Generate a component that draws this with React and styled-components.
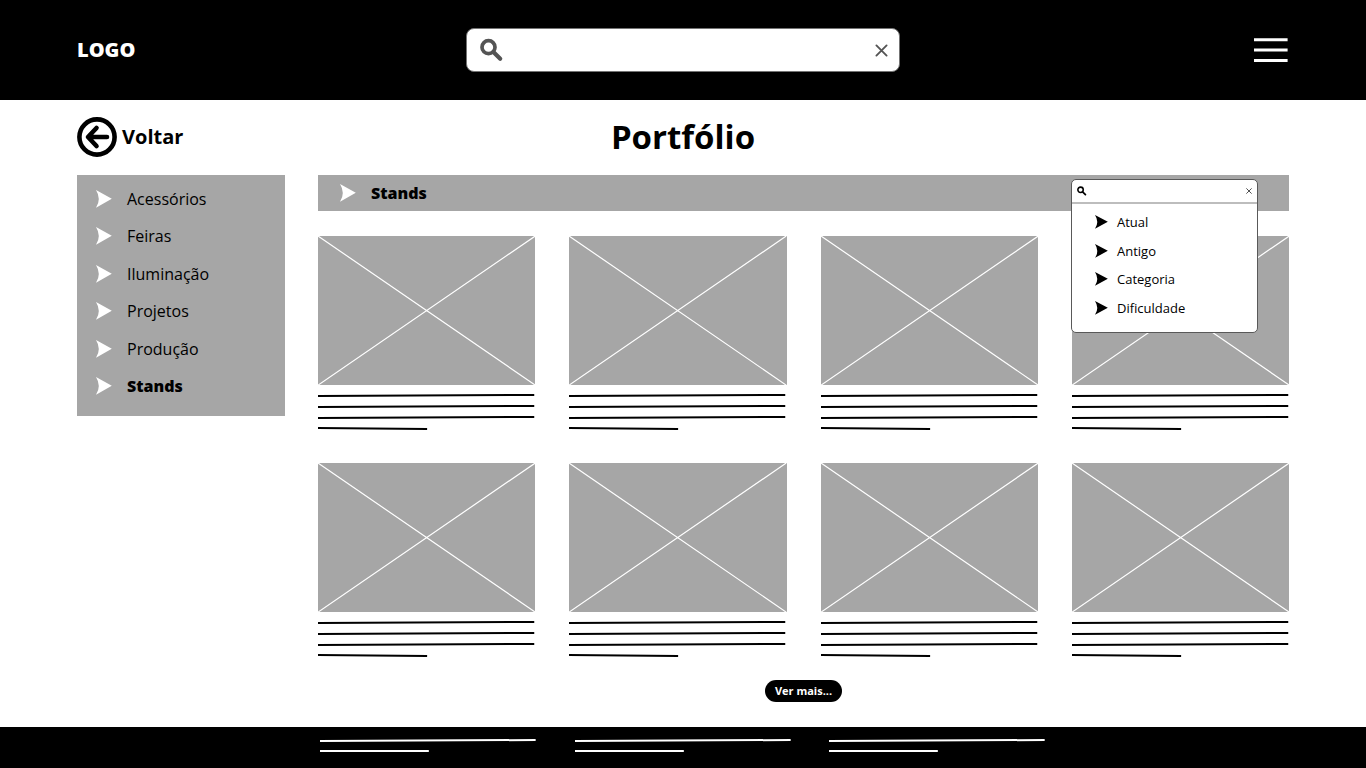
import React from "react";
import styled, { createGlobalStyle } from "styled-components";

const GlobalStyle = createGlobalStyle`
  *, *::before, *::after { box-sizing: border-box; }
  body {
    margin: 0;
    background: #fff;
    color: #000;
    font-family: "Open Sans", "Noto Sans", sans-serif;
  }
  button { font: inherit; color: inherit; }
  svg { display: block; }
`;

const Page = styled.div`
  min-height: 100vh;
  display: flex;
  flex-direction: column;
`;

const Header = styled.header`
  height: 100px;
  padding: 0 78px 0 77px;
  background: #000;
  color: #fff;
  display: grid;
  grid-template-columns: 1fr minmax(200px, 434px) 1fr;
  align-items: center;
`;

const Logo = styled.a`
  justify-self: start;
  color: inherit;
  font-size: 20px;
  line-height: 28px;
  font-weight: 800;
  text-decoration: none;
`;

const IconButton = styled.button`
  flex: none;
  padding: 0;
  border: 0;
  background: none;
  cursor: pointer;
  color: ${(p) => p.$color || "inherit"};
`;

const MenuButton = styled(IconButton)`
  justify-self: end;
`;

const SearchBox = styled.form`
  height: 44px;
  padding: 0 11px 0 13px;
  display: flex;
  align-items: center;
  gap: 8px;
  background: #fff;
  border: 1px solid #737373;
  border-radius: 8px;
`;

const SearchInput = styled.input`
  flex: 1;
  min-width: 0;
  width: 0;
  padding: 0;
  border: 0;
  outline: 0;
  background: transparent;
  font: inherit;
  font-size: ${(p) => p.$size}px;
`;

const TitleRow = styled.div`
  height: 75px;
  padding: 0 77px 2px;
  display: grid;
  grid-template-columns: 1fr auto 1fr;
  align-items: center;
`;

const BackLink = styled.a`
  justify-self: start;
  display: flex;
  align-items: center;
  gap: 5px;
  color: inherit;
  font-size: 20px;
  line-height: 28px;
  font-weight: 700;
  text-decoration: none;
`;

const Title = styled.h1`
  margin: 0;
  font-size: 33px;
  line-height: 46px;
  font-weight: 700;
`;

const Content = styled.div`
  flex: 1;
  padding: 0 77px 24px;
  display: grid;
  grid-template-columns: 208px minmax(0, 1fr);
  gap: 33px;
  align-items: start;
`;

const Sidebar = styled.nav`
  min-height: 241px;
  padding: 12px 19px 18px;
  display: flex;
  flex-direction: column;
  justify-content: space-between;
  background: #a6a6a6;
`;

const SideLink = styled.a`
  display: flex;
  align-items: center;
  gap: 15px;
  color: #000;
  font-size: 16px;
  line-height: 24px;
  font-weight: ${(p) => (p.$active ? 800 : 400)};
  text-decoration: none;
`;

const Main = styled.main`
  display: flex;
  flex-direction: column;
  align-items: stretch;
`;

const SectionBar = styled.div`
  position: relative;
  height: 36px;
  padding: 0 22px;
  display: flex;
  align-items: center;
  gap: 15px;
  background: #a6a6a6;
`;

const SectionTitle = styled.h2`
  margin: 0;
  font-size: 16px;
  line-height: 24px;
  font-weight: 800;
`;

const FilterMenu = styled.div`
  position: absolute;
  z-index: 1;
  top: 4px;
  right: 31px;
  width: 187px;
  background: #fff;
  border: 1px solid #595959;
  border-radius: 5px;
`;

const FilterSearch = styled.form`
  height: 24px;
  padding: 0 5px;
  display: flex;
  align-items: center;
  gap: 4px;
  border-bottom: 2px solid #bdbdbd;
`;

const FilterList = styled.ul`
  min-height: 128px;
  margin: 0;
  padding: 6px 23px 12px;
  display: flex;
  flex-direction: column;
  justify-content: space-between;
  list-style: none;
`;

const FilterOption = styled.button`
  width: 100%;
  height: 24px;
  padding: 0;
  display: flex;
  align-items: center;
  gap: 9px;
  border: 0;
  background: none;
  font-size: 13px;
  line-height: 24px;
  cursor: pointer;
`;

const CardGrid = styled.div`
  margin-top: 25px;
  display: grid;
  grid-template-columns: repeat(4, minmax(0, 1fr));
  gap: 33px 34px;
`;

const Card = styled.article`
  display: flex;
  flex-direction: column;
  gap: 8px;
`;

const Thumb = styled.svg`
  width: 100%;
  height: auto;
  aspect-ratio: 217 / 149;
  background: #a6a6a6;
`;

const Lines = styled.svg`
  width: 100%;
  height: ${(p) => p.$height}px;
`;

const MoreButton = styled.button`
  align-self: center;
  height: 22px;
  margin-top: 23px;
  padding: 0 10px;
  border: 0;
  border-radius: 11px;
  background: #000;
  color: #fff;
  font-size: 11px;
  line-height: 22px;
  font-weight: 700;
  cursor: pointer;
`;

const Footer = styled.footer`
  height: 41px;
  padding: 11px 320px 0;
  display: grid;
  grid-template-columns: repeat(3, minmax(0, 217px));
  gap: 38px;
  background: #000;
`;

const SearchIcon = ({ size }) => (
  <svg width={size} height={size} viewBox="0 0 24 24" fill="none" stroke="currentColor" aria-hidden="true">
    <circle cx="8.5" cy="9.2" r="6.5" strokeWidth="3.7" />
    <path d="M13.4 14 20.2 20.8" strokeWidth="4.2" strokeLinecap="round" />
  </svg>
);

const CloseIcon = ({ size, weight }) => (
  <svg width={size} height={size} viewBox="0 0 14 14" fill="none" stroke="currentColor" aria-hidden="true">
    <path d="M1.5 1.5 12.5 12.5M12.5 1.5 1.5 12.5" strokeWidth={weight} strokeLinecap="round" />
  </svg>
);

const MenuIcon = () => (
  <svg width="34" height="26" viewBox="0 0 34 26" stroke="#fff" strokeWidth="3" aria-hidden="true">
    <path d="M0 2.8H33.6M0 13H33.6M0 23.4H33.6" />
  </svg>
);

const BackIcon = () => (
  <svg width="40" height="40" viewBox="0 0 40 40" fill="none" stroke="#000" strokeWidth="4.6" aria-hidden="true">
    <circle cx="20" cy="20" r="17.6" />
    <path d="M30 20H11.5M19.5 11 11 20 19.5 29" strokeLinecap="round" strokeLinejoin="round" />
  </svg>
);

const Arrow = ({ width, height, color }) => (
  <svg width={width} height={height} viewBox="0 0 16 18" preserveAspectRatio="none" fill={color} aria-hidden="true">
    <path d="M0 0 15.8 8.8 0 17.8Q5.6 9 0 0Z" />
  </svg>
);

const Placeholder = () => (
  <Thumb viewBox="0 0 217 149" preserveAspectRatio="none" role="img" aria-label="Imagem">
    <path d="M0 0 217 149M217 0 0 149" stroke="#fff" strokeWidth="1.2" />
  </Thumb>
);

const cardLines = "M0 3 216 2M0 14 216 13M0 25 216 24M0 35 109 36";
const footerLines = "M0 3 216 2M0 13 109 13";

const TextLines = ({ d, height, color }) => (
  <Lines $height={height} viewBox={`0 0 217 ${height}`} preserveAspectRatio="none" aria-hidden="true">
    <path d={d} stroke={color} strokeWidth="2" fill="none" vectorEffect="non-scaling-stroke" />
  </Lines>
);

const categories = ["Acessórios", "Feiras", "Iluminação", "Projetos", "Produção", "Stands"];
const filters = ["Atual", "Antigo", "Categoria", "Dificuldade"];
const cards = [1, 2, 3, 4, 5, 6, 7, 8];

export default function App() {
  const stop = (e) => e.preventDefault();
  return (
    <Page>
      <GlobalStyle />
      <Header>
        <Logo href="#">LOGO</Logo>
        <SearchBox role="search" onSubmit={stop}>
          <IconButton type="submit" aria-label="Pesquisar" $color="#545454">
            <SearchIcon size={24} />
          </IconButton>
          <SearchInput type="text" aria-label="Pesquisar no site" $size={16} />
          <IconButton type="reset" aria-label="Limpar pesquisa" $color="#545454">
            <CloseIcon size={13} weight={2} />
          </IconButton>
        </SearchBox>
        <MenuButton type="button" aria-label="Menu">
          <MenuIcon />
        </MenuButton>
      </Header>

      <TitleRow>
        <BackLink href="#">
          <BackIcon />
          Voltar
        </BackLink>
        <Title>Portfólio</Title>
      </TitleRow>

      <Content>
        <Sidebar aria-label="Categorias">
          {categories.map((name) => (
            <SideLink key={name} href="#" $active={name === "Stands"}>
              <Arrow width={16} height={18} color="#fff" />
              {name}
            </SideLink>
          ))}
        </Sidebar>

        <Main>
          <SectionBar>
            <Arrow width={16} height={18} color="#fff" />
            <SectionTitle>Stands</SectionTitle>
            <FilterMenu>
              <FilterSearch onSubmit={stop}>
                <IconButton type="submit" aria-label="Pesquisar filtro" $color="#000">
                  <SearchIcon size={10} />
                </IconButton>
                <SearchInput type="text" aria-label="Filtro" $size={12} />
                <IconButton type="reset" aria-label="Limpar filtro" $color="#333">
                  <CloseIcon size={6} weight={2} />
                </IconButton>
              </FilterSearch>
              <FilterList>
                {filters.map((name) => (
                  <li key={name}>
                    <FilterOption type="button">
                      <Arrow width={13} height={14} color="#000" />
                      {name}
                    </FilterOption>
                  </li>
                ))}
              </FilterList>
            </FilterMenu>
          </SectionBar>

          <CardGrid>
            {cards.map((id) => (
              <Card key={id}>
                <Placeholder />
                <TextLines d={cardLines} height={37} color="#000" />
              </Card>
            ))}
          </CardGrid>

          <MoreButton type="button">Ver mais...</MoreButton>
        </Main>
      </Content>

      <Footer>
        {[1, 2, 3].map((id) => (
          <TextLines key={id} d={footerLines} height={16} color="#fff" />
        ))}
      </Footer>
    </Page>
  );
}
